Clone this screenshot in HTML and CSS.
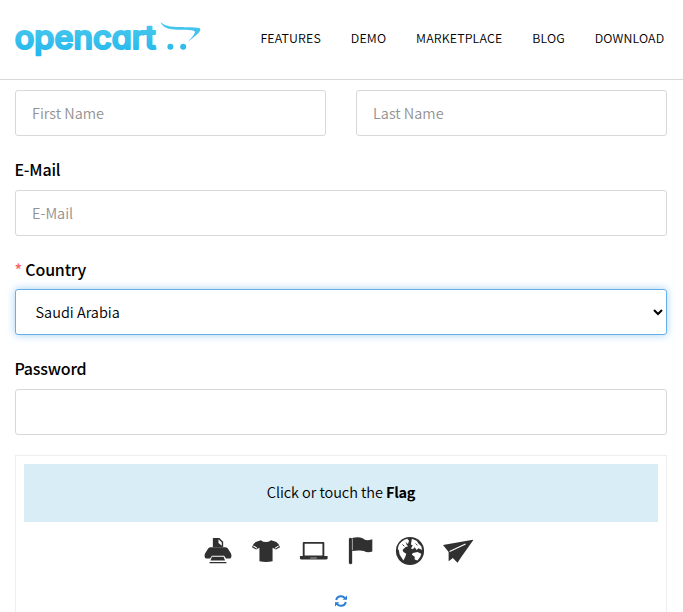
FILE: index.html
```html
<!DOCTYPE html>
<html lang="en">
<head>
<meta charset="utf-8">
<title>OpenCart - Register</title>
<link rel="stylesheet" href="styles.css">
</head>
<body>
<header class="header">
  <svg class="logo" width="190" height="60" viewBox="0 -10 190 60" role="img" aria-label="opencart">
    <defs>
      <linearGradient id="brand" gradientUnits="userSpaceOnUse" x1="0" y1="4" x2="0" y2="36">
        <stop offset="0" stop-color="#4ac7ec"/>
        <stop offset="1" stop-color="#22b8ee"/>
      </linearGradient>
    </defs>
    <text class="wordmark" x="0.800" y="28.800" textLength="141" lengthAdjust="spacingAndGlyphs" fill="url(#brand)" stroke="url(#brand)">opencart</text>
    <path fill="url(#brand)" d="M146.500 2c4 4 10 4.800 20 5.100 7 .2 16-.4 19.200 1.200 1.500 1 .3 3.200-2 5.500l-9.800 8.300c3.300-4 7.800-9 7-10.600-1-1.800-9-1.200-17-1.700-9-.5-15.200-2-17.400-7.800z"/>
    <circle cx="156.400" cy="26.800" r="3" fill="url(#brand)"/>
    <circle cx="169.200" cy="26.800" r="3" fill="url(#brand)"/>
  </svg>
  <nav class="nav">
    <a>FEATURES</a><a>DEMO</a><a>MARKETPLACE</a><a>BLOG</a><a>DOWNLOAD</a>
  </nav>
</header>
<form class="form">
  <div class="row">
    <input class="control" type="text" placeholder="First Name">
    <input class="control" type="text" placeholder="Last Name">
  </div>
  <label class="label" for="email">E-Mail</label>
  <input class="control" id="email" type="text" placeholder="E-Mail">
  <label class="label" for="country"><span class="required">*</span> Country</label>
  <select class="control select" id="country"><option>Saudi Arabia</option></select>
  <label class="label" for="password">Password</label>
  <input class="control" id="password" type="password">
  <section class="captcha">
    <p class="prompt">Click or touch the <strong>Flag</strong></p>
    <div class="icons">
      <svg viewBox="0 0 32 32"><path d="M10.500 12V2h7l4 4v6z"/><path d="M8 12h16q2 0 3 2l3 5q1 4-1 5h-4.500l-2-3h-13l-2 3H3q-2-1-1-5l3-5q1-2 3-2z"/><path d="M9.500 22h12.500l1.500 4H8zM7 27.600h18v1.400H7z"/><path class="cut" d="M16.500 3.500 20 7v3.500l-3.500-3z"/></svg>
      <svg viewBox="0 0 32 32"><path d="M10.500 4.500q5 4 11 0l5.500 2q3 2 4 5.500l-4.500 2.500L23 12.500V27q-7 1.500-14 0V12.500L5.500 14.500 1 12q1-3.500 4-5.500z"/><path class="line" d="m2.500 10.500 4 2.700M29.500 10.500 25.500 13.200"/></svg>
      <svg viewBox="0 0 32 32"><path fill-rule="evenodd" d="M4 7.500q0-1 1-1h21q1 0 1 1v14H4zM6 8.300v12.400h19V8.300z"/><path d="M1 21.200h29.500V24q0 1-2 1H3q-2 0-2-1z"/><path class="line faint" d="M12 23.500h7"/></svg>
      <svg viewBox="0 0 32 32"><path d="M2 3q1.500-2.500 3.500 0v26q-1.500 2-3.500 0z"/><path d="M5.500 2Q10 1 14 1.500q3 .5 5 2.500 3 1 8-.5v13q-5 2-9-.5-3-1-6-.5l-6.500.5z"/><path class="line faint" d="M5.800 3v12"/></svg>
      <svg viewBox="0 0 32 32"><circle cx="16" cy="16" r="15"/><path class="cut" d="m10 4 3-1 2 2-1 3-2 1 2 2-3 1-3 3 1 2 3 2-1 3-2 4-4-6-1-5-1-1q0-6 7-10zM18 3l5 2 2 3 3 3 1 4-4-2-2 2-2-3-2 2-2-1 2-3-2-1zM19 18l5-1 4 2-1 3-3 4-3-1v-3l-3-2z"/><path d="m12 7 1 2M22 8l2 2M8 9l2 2" stroke="#303030"/></svg>
      <svg viewBox="0 0 32 32"><path d="M32.500 4 0 9.500l6 7.500v10l4.500-3.500 5 5 4-6z"/><path class="line" d="m7 16.500 17-8"/></svg>
    </div>
    <svg class="refresh" viewBox="0 0 12 12"><path d="M1.200 5Q2 1.200 6 1.200q2.500 0 4 2M10.800 7Q10 10.800 6 10.800q-2.500 0-4-2"/><path class="tip" d="M12 .5v4.300H7.700zM0 11.500V7.200h4.300z"/></svg>
  </section>
</form>
</body>
</html>
```
FILE: styles.css
```css
* { box-sizing: border-box; }
html { overflow: hidden; }
body {
  margin: 0;
  height: 612px;
  overflow: hidden;
  background: #fff;
  color: #000;
  font: 350 14.5px/22px "Noto Sans CJK JP", "Noto Sans", sans-serif;
}
.header {
  height: 80px;
  border-bottom: 1px solid #d8d8d8;
  padding: 0 18.700px 3px 14px;
  display: flex;
  align-items: center;
  justify-content: space-between;
}
.logo { display: block; margin-top: 3px; overflow: visible; }
.wordmark {
  font: 500 32px Inter, sans-serif;
  font-feature-settings: "cv11";
  stroke-width: 2.2px;
  stroke-linejoin: round;
}
.nav { display: flex; gap: 29.900px; font-size: 12.4px; letter-spacing: .15px; white-space: nowrap; }
.form { padding: 10px 16px 0 15px; }
.row { display: grid; grid-template-columns: 1fr 1fr; gap: 30px; }
.control {
  display: block;
  width: 100%;
  height: 46px;
  margin: 0;
  padding: 0 16px 2px;
  border: 1px solid #d8d8d8;
  border-radius: 3px;
  background: #fff;
  color: #000;
  font: 350 14.5px/22px "Noto Sans CJK JP", "Noto Sans", sans-serif;
  outline: none;
}
.control::placeholder { color: #929292; opacity: 1; }
.select { padding-left: 15.500px; border-color: #66afe9; box-shadow: 0 0 8px rgba(102, 175, 233, .6); }
.label { display: block; height: 54px; margin-left: -.6px; padding-top: 22px; font-size: 16px; font-weight: 500; letter-spacing: -.2px; }
.label[for="country"] { height: 53px; }
.required { color: #f66; }
.captcha {
  margin-top: 20px;
  height: 180px;
  padding: 8px;
  border: 1px solid #eee;
}
.prompt {
  margin: 0;
  height: 58px;
  background: #d9edf7;
  text-align: center;
  line-height: 56px;
  letter-spacing: -.05px;
}
.prompt strong { font-weight: 600; letter-spacing: -.3px; }
.icons { display: flex; justify-content: center; gap: 18px; margin: 14px 7px 0 0; }
.icons svg { width: 30px; height: 30px; fill: #303030; }
.icons .cut { fill: #fff; }
.icons .line { fill: none; stroke: #fff; stroke-width: 1.2; }
.icons .faint { stroke: #999; }
.refresh { display: block; width: 12px; height: 12px; margin: 29px auto 0; overflow: visible; fill: none; stroke: #2a7fd4; stroke-width: 2; }
.refresh .tip { fill: #2a7fd4; stroke: none; }
```
